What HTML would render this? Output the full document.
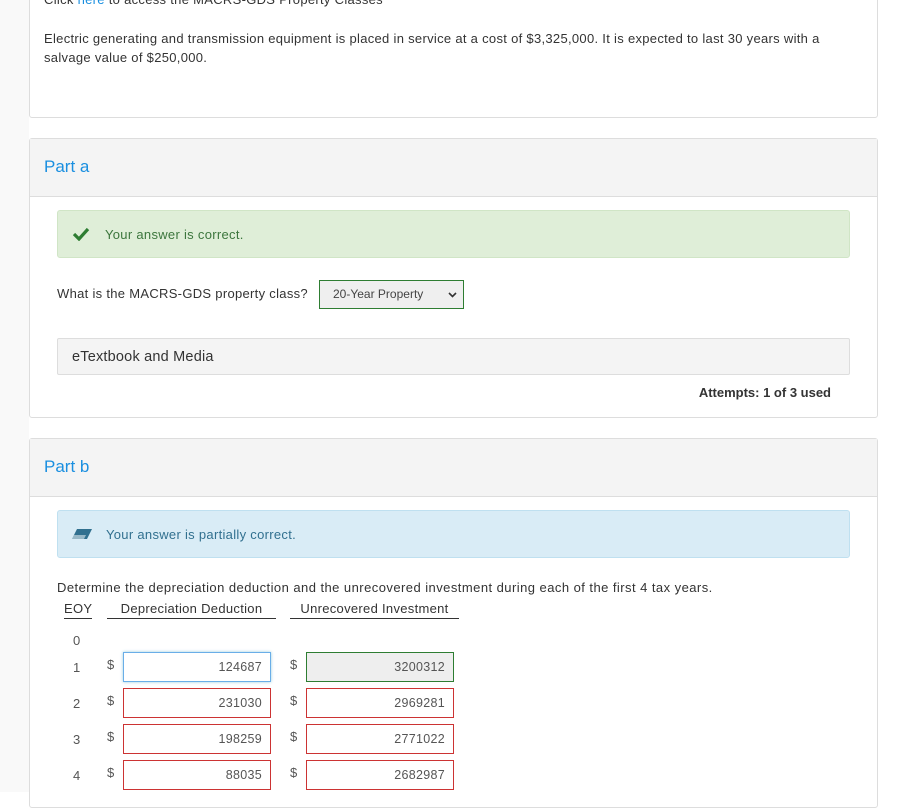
<!DOCTYPE html>
<html><head><style>
*{box-sizing:border-box;margin:0;padding:0}
body{width:905px;height:792px;overflow:hidden;background:#fff;font-family:"Liberation Sans",sans-serif;color:#333;font-size:13px;letter-spacing:0.3px;position:relative}
.abs{position:absolute}
.card{position:absolute;left:29px;width:849px;border:1px solid #ddd;border-radius:3px;background:#fff}
.hdr{position:absolute;left:0;right:0;top:0;height:58px;background:#f4f4f4;border-bottom:1px solid #ddd}
.hdr span{position:absolute;left:14px;top:18px;font-size:17px;color:#1a8fe0;letter-spacing:0}
.in{position:absolute;height:30px;border:1px solid #c33;background:#fff;text-align:right;padding-right:8px;line-height:28px;font-size:12.5px;color:#555}
.d{position:absolute;font-size:13px;color:#555}
</style></head><body>
<div class="abs" style="left:0;top:0;width:29px;height:792px;background:#f9f9f9"></div>
<div class="card" style="top:-5px;height:123px">
<div class="abs" style="left:14px;top:-4px;font-size:13px;color:#333">Click <span style="color:#1a8fe0">here</span> to access the MACRS-GDS Property Classes</div>
<div class="abs" style="left:14px;top:33px;width:800px;line-height:19px;font-size:13px">Electric generating and transmission equipment is placed in service at a cost of $3,325,000. It is expected to last 30 years with a salvage value of $250,000.</div>
</div>
<div class="card" style="top:138px;height:280px">
<div class="hdr"><span>Part a</span></div>
<div class="abs" style="left:27px;top:71px;width:793px;height:48px;background:#dfeed8;border:1px solid #d0e5c6;border-radius:3px">
<svg class="abs" style="left:14px;top:16px" width="18" height="14" viewBox="0 0 18 14"><path d="M2 7l5 5L16 2" stroke="#2e7d32" stroke-width="3.2" fill="none"/></svg>
<div class="abs" style="left:47px;top:16px;color:#3c763d">Your answer is correct.</div></div>
<div class="abs" style="left:27px;top:147px">What is the MACRS-GDS property class?</div>
<div class="abs" style="left:289px;top:141px;width:145px;height:29px;border:1px solid #2e7d32;background:#efefef;font-size:12px;line-height:27px;padding-left:13px;color:#444;letter-spacing:0">20-Year Property
<svg class="abs" style="right:6px;top:11px" width="9" height="6" viewBox="0 0 9 6"><path d="M1 1l3.5 3.5L8 1" stroke="#333" stroke-width="1.6" fill="none"/></svg></div>
<div class="abs" style="left:27px;top:199px;width:793px;height:37px;background:#f4f4f4;border:1px solid #ddd;border-radius:2px;font-size:14.5px;line-height:37px;padding-left:14px;letter-spacing:0.2px">eTextbook and Media</div>
<div class="abs" style="right:46px;top:246px;font-weight:bold;font-size:13px;letter-spacing:0">Attempts: 1 of 3 used</div>
</div>
<div class="card" style="top:438px;height:370px">
<div class="hdr"><span>Part b</span></div>
<div class="abs" style="left:27px;top:71px;width:793px;height:48px;background:#d9ecf6;border:1px solid #bfe0f0;border-radius:3px">
<svg class="abs" style="left:13px;top:17px" width="22" height="12" viewBox="0 0 22 12"><path d="M6 1h15l-5 10H1z" fill="#31708f"/><path d="M3 7h12l-2 4H1z" fill="#fff" opacity=".5"/></svg>
<div class="abs" style="left:48px;top:16px;color:#31708f">Your answer is partially correct.</div></div>
</div>
<div class="abs" style="left:57px;top:580px;letter-spacing:0.45px">Determine the depreciation deduction and the unrecovered investment during each of the first 4 tax years.</div>
<div class="abs" style="left:64px;top:601px;border-bottom:1px solid #333;padding:0 0 2px 0">EOY</div>
<div class="abs" style="left:107px;top:601px;width:169px;border-bottom:1px solid #333;text-align:center;padding-bottom:2px">Depreciation Deduction</div>
<div class="abs" style="left:290px;top:601px;width:169px;border-bottom:1px solid #333;text-align:center;padding-bottom:2px">Unrecovered Investment</div>
<div class="d" style="left:73px;top:633px">0</div>
<div class="d" style="left:73px;top:660px">1</div><div class="d" style="left:107px;top:657px">$</div><div class="d" style="left:290px;top:657px">$</div>
<div class="in" style="left:123px;top:652px;width:148px;border-color:#6aaee8;box-shadow:0 0 3px #9cd">124687</div>
<div class="in" style="left:306px;top:652px;width:148px;border-color:#2e7d32;background:#eee">3200312</div>
<div class="d" style="left:73px;top:696px">2</div><div class="d" style="left:107px;top:693px">$</div><div class="d" style="left:290px;top:693px">$</div>
<div class="in" style="left:123px;top:688px;width:148px">231030</div><div class="in" style="left:306px;top:688px;width:148px">2969281</div>
<div class="d" style="left:73px;top:732px">3</div><div class="d" style="left:107px;top:729px">$</div><div class="d" style="left:290px;top:729px">$</div>
<div class="in" style="left:123px;top:724px;width:148px">198259</div><div class="in" style="left:306px;top:724px;width:148px">2771022</div>
<div class="d" style="left:73px;top:768px">4</div><div class="d" style="left:107px;top:765px">$</div><div class="d" style="left:290px;top:765px">$</div>
<div class="in" style="left:123px;top:760px;width:148px">88035</div><div class="in" style="left:306px;top:760px;width:148px">2682987</div>
</body></html>
